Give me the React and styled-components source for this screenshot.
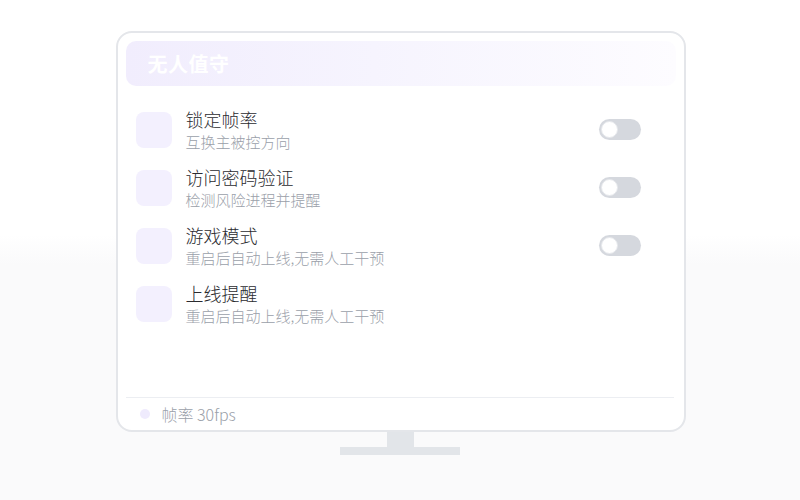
import React from 'react';
import styled, { createGlobalStyle } from 'styled-components';

const GlobalStyle = createGlobalStyle`
	html, body {
		margin: 0;
		padding: 0;
	}
	body {
		height: 500px;
		background: linear-gradient(180deg, #ffffff 0px, #ffffff 235px, #fafafb 265px, #fafafb 100%);
		font-family: "Noto Sans CJK SC", "Noto Sans", sans-serif;
	}
`;

const items = [
	{ title: '锁定帧率', desc: '互换主被控方向', toggle: true },
	{ title: '访问密码验证', desc: '检测风险进程并提醒', toggle: true },
	{ title: '游戏模式', desc: '重启后自动上线,无需人工干预', toggle: true },
	{ title: '上线提醒', desc: '重启后自动上线,无需人工干预', toggle: false },
];

const App = () => {
	return (
		<Page>
			<GlobalStyle />
			<Monitor>
				<Header>
					<HeaderTitle>无人值守</HeaderTitle>
				</Header>
				<List>
					{items.map((item) => (
						<Row key={item.title}>
							<IconBox />
							<TextBlock>
								<Title>{item.title}</Title>
								<Desc>{item.desc}</Desc>
							</TextBlock>
							{item.toggle && (
								<Toggle>
									<Knob />
								</Toggle>
							)}
						</Row>
					))}
				</List>
				<Divider />
				<Footer>
					<Dot />
					<FooterText>帧率 30fps</FooterText>
				</Footer>
			</Monitor>
			<Neck />
			<Base />
		</Page>
	);
};

export default App;

const Page = styled.div`
	display: flex;
	flex-direction: column;
	align-items: center;
	padding-top: 31px;
`;

const Monitor = styled.div`
	box-sizing: border-box;
	width: 570px;
	height: 401px;
	margin-left: 1px;
	border: 2px solid #e4e6ea;
	border-radius: 16px;
	background: #ffffff;
	padding: 8px 8px 0;
	display: flex;
	flex-direction: column;
`;

const Header = styled.div`
	height: 45px;
	border-radius: 10px;
	background: linear-gradient(90deg, #f1edfd 0%, #f6f4fe 45%, #fdfcff 100%);
	display: flex;
	align-items: center;
	padding-left: 22px;
`;

const HeaderTitle = styled.span`
	color: #ffffff;
	font-size: 20px;
	font-weight: 700;
	letter-spacing: 0.5px;
`;

const List = styled.div`
	flex: 1;
	display: flex;
	flex-direction: column;
	gap: 13px;
	padding: 21px 0 0 10px;
`;

const Row = styled.div`
	display: flex;
	align-items: center;
	padding-right: 35px;
`;

const IconBox = styled.div`
	width: 36px;
	height: 36px;
	border-radius: 8px;
	background: #f3f0fe;
	flex-shrink: 0;
`;

const TextBlock = styled.div`
	flex: 1;
	margin-left: 14px;
	display: flex;
	flex-direction: column;
`;

const Title = styled.div`
	font-size: 18px;
	font-weight: 300;
	line-height: 24px;
	color: #2b2b2f;
`;

const Desc = styled.div`
	margin-top: 1px;
	font-size: 15px;
	font-weight: 300;
	line-height: 20px;
	color: #9aa0a9;
`;

const Toggle = styled.div`
	box-sizing: border-box;
	width: 42px;
	height: 21px;
	border-radius: 11px;
	background: #d5d8de;
	padding: 2px;
	display: flex;
	align-items: center;
`;

const Knob = styled.div`
	box-sizing: border-box;
	width: 17px;
	height: 17px;
	border-radius: 50%;
	background: #ffffff;
	border: 1px solid #e6e8ec;
`;

const Divider = styled.div`
	height: 1px;
	background: #eceef2;
	margin: 0 2px 0 0;
`;

const Footer = styled.div`
	height: 32px;
	display: flex;
	align-items: center;
	padding-left: 14px;
`;

const Dot = styled.div`
	width: 10px;
	height: 10px;
	border-radius: 50%;
	background: #efebfd;
`;

const FooterText = styled.span`
	margin-left: 12px;
	font-size: 16px;
	font-weight: 300;
	color: #9aa0a9;
`;

const Neck = styled.div`
	width: 27px;
	height: 15px;
	background: #e2e5e9;
`;

const Base = styled.div`
	width: 120px;
	height: 8px;
	background: #e2e5e9;
`;
